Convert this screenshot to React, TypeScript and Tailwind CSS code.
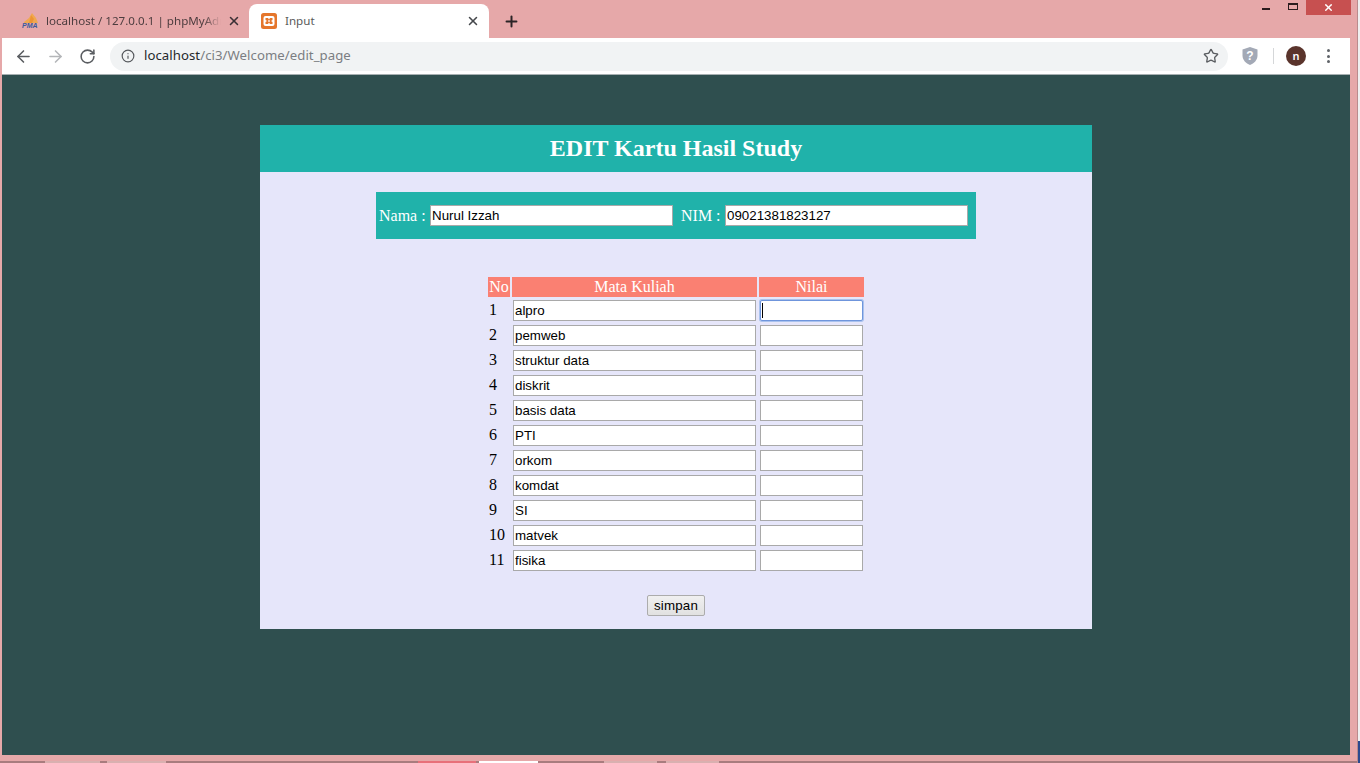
import { ArrowLeft, ArrowRight, Info, Plus, RotateCw, Star, X } from "lucide-react";

const matkul = [
  "alpro",
  "pemweb",
  "struktur data",
  "diskrit",
  "basis data",
  "PTI",
  "orkom",
  "komdat",
  "SI",
  "matvek",
  "fisika",
];

const taskItems = [
  { ml: "ml-[45px]", w: "w-[55px]", bg: "bg-[#d9b0b0]" },
  { ml: "ml-[7px]", w: "w-[59px]", bg: "bg-[#d9b0b0]" },
  { ml: "ml-[252px]", w: "w-[58px]", bg: "bg-[#e8707a]" },
  { ml: "ml-[3px]", w: "w-[59px]", bg: "bg-white" },
  { ml: "ml-[66px]", w: "w-[53px]", bg: "bg-[#d9b0b0]" },
  { ml: "ml-[9px]", w: "w-[53px]", bg: "bg-[#d9b0b0]" },
];

function PmaIcon() {
  return (
    <svg width="18" height="16" viewBox="0 0 18 16" className="shrink-0">
      <path d="M3 9 L8 5 L11 0 L15 5 L17 10 L3 10 Z" fill="#f0a850" />
      <path d="M10 2 L13 6 L11 10 L8 10 Z" fill="#ee9434" />
      <text x="1" y="15" fontSize="7" fontWeight="700" fontStyle="italic" fontFamily="Liberation Sans, sans-serif" fill="#3b5a9a">
        PMA
      </text>
    </svg>
  );
}

function XamppIcon() {
  return (
    <svg width="16" height="16" viewBox="0 0 16 16" className="shrink-0">
      <rect width="16" height="16" rx="2.5" fill="#e5762c" />
      <rect x="2.5" y="3" width="11" height="10" rx="2" fill="#fff" />
      <path d="M4.5 5 H7 L8 6.5 L9 5 H11.5 V7 L10 8 L11.5 9 V11 H9 L8 9.5 L7 11 H4.5 V9 L6 8 L4.5 7 Z" fill="#e5762c" />
      <rect x="7.2" y="7.2" width="1.6" height="1.6" fill="#fff" />
    </svg>
  );
}

function ShieldIcon() {
  return (
    <svg width="16" height="18" viewBox="0 0 16 18" className="shrink-0">
      <path d="M8 0 L15.5 2.5 V8.5 C15.5 13 12 16.5 8 18 C4 16.5 0.5 13 0.5 8.5 V2.5 Z" fill="#a3a9b6" />
      <text x="8" y="13" textAnchor="middle" fontSize="12" fontWeight="700" fontFamily="Liberation Sans, sans-serif" fill="#fff">
        ?
      </text>
    </svg>
  );
}

function TabStrip() {
  return (
    <div className="relative flex h-[38px] shrink-0 items-end">
      <div className="ml-[21px] flex h-[34px] w-[224px] items-center">
        <PmaIcon />
        <span className="ml-[7px] w-[175px] overflow-hidden whitespace-nowrap text-[11.6px] text-[#4d3d3f] [mask-image:linear-gradient(to_right,black_90%,transparent)]">
          localhost / 127.0.0.1 | phpMyAdmin
        </span>
        <X size={14} strokeWidth={2.6} className="ml-[6px] shrink-0 text-[#3b3035]" />
      </div>
      <div className="ml-[4px] flex h-[34px] w-[240px] items-center rounded-t-[8px] bg-white pl-[12px]">
        <XamppIcon />
        <span className="ml-[8px] flex-1 text-[11.6px] text-[#5a5a5a]">Input</span>
        <X size={14} strokeWidth={2.6} className="mr-[9px] text-[#45484c]" />
      </div>
      <div className="ml-[14px] flex h-[34px] items-center">
        <Plus size={17} strokeWidth={2.8} className="text-[#2b2426]" />
      </div>

      {/* window buttons */}
      <div className="absolute right-[6px] top-0 flex items-start">
        <div className="mr-[18px] mt-[8px] h-[2px] w-[8px] bg-[#2a1c1e]" />
        <div className="mr-[8px] mt-[3px] h-[7px] w-[10px] border border-t-2 border-[#2a1c1e]" />
        <div className="flex h-[15px] w-[45px] items-center justify-center bg-[#c75050]">
          <X size={11} strokeWidth={3} className="text-white" />
        </div>
      </div>
    </div>
  );
}

function Toolbar() {
  return (
    <div className="ml-[2px] mr-[7px] flex h-[37px] shrink-0 items-center border-b border-[#a7b0b2] bg-white">
      <ArrowLeft size={19} strokeWidth={2} className="ml-[12px] text-[#5a5d61]" />
      <ArrowRight size={19} strokeWidth={2} className="ml-[13px] text-[#b4b6b9]" />
      <RotateCw size={17} strokeWidth={2.2} className="ml-[14px] text-[#5a5d61]" />
      <div className="ml-[14px] flex h-[29px] w-[1118px] items-center rounded-full bg-[#f1f3f4] pl-[11px]">
        <Info size={14} strokeWidth={2} className="text-[#55585c]" />
        <span className="ml-[9px] text-[13.2px] tracking-[0.05px] text-[#7b7e82]">
          <span className="text-[#25282b]">localhost</span>/ci3/Welcome/edit_page
        </span>
      </div>
      <Star size={16} strokeWidth={2} className="-ml-[25px] text-[#5a5d61]" />
      <div className="ml-[23px]">
        <ShieldIcon />
      </div>
      <div className="ml-[15px] h-[16px] w-px bg-[#d5d7d9]" />
      <div className="ml-[12px] flex h-[20px] w-[20px] items-center justify-center rounded-full bg-[#5a342c] text-[11px] font-semibold text-white">
        n
      </div>
      <div className="ml-[21px] flex flex-col gap-[2.5px]">
        <span className="h-[3px] w-[3px] rounded-full bg-[#5f6368]" />
        <span className="h-[3px] w-[3px] rounded-full bg-[#5f6368]" />
        <span className="h-[3px] w-[3px] rounded-full bg-[#5f6368]" />
      </div>
    </div>
  );
}

const inputClass =
  "h-[21px] border border-[#a9a9a9] bg-white px-px font-['Liberation_Sans',sans-serif] text-[13.33px] text-black outline-none";

function Khs() {
  return (
    <div className="mx-auto mt-[50px] w-[832px] bg-[#e6e6fa] font-['Liberation_Serif',serif] text-[16px]">
      <div className="flex h-[47px] items-center justify-center bg-[#20b2aa] pb-[2px] text-[24px] font-bold text-white">
        EDIT Kartu Hasil Study
      </div>

      <div className="mx-auto mt-[20px] flex h-[47px] w-[600px] items-center bg-[#20b2aa] pl-[3px] text-white">
        <span className="w-[51px]">Nama :</span>
        <input readOnly defaultValue="Nurul Izzah" className={`${inputClass} w-[243px]`} />
        <span className="ml-[8px] w-[44px]">NIM :</span>
        <input readOnly defaultValue="09021381823127" className={`${inputClass} w-[243px]`} />
      </div>

      <div className="mx-auto mt-[38px] grid w-[376px] grid-cols-[22px_245px_105px] gap-x-[2px] gap-y-[4px] text-black">
        <div className="flex h-[20px] items-center justify-center bg-[#fa8072] text-white">No</div>
        <div className="flex h-[20px] items-center justify-center bg-[#fa8072] text-white">Mata Kuliah</div>
        <div className="flex h-[20px] items-center justify-center bg-[#fa8072] text-white">Nilai</div>
        {matkul.map((m, i) => (
          <div key={m} className="contents">
            <div className={`flex h-[21px] items-center pb-[2px] pl-px ${i === 0 ? "-mt-px" : ""}`}>{i + 1}</div>
            <div className={`px-px ${i === 0 ? "-mt-px" : ""}`}>
              <input readOnly defaultValue={m} className={`${inputClass} block w-full`} />
            </div>
            <div className={`relative px-px ${i === 0 ? "-mt-px" : ""}`}>
              <input
                readOnly
                className={`${inputClass} block w-[103px] ${i === 0 ? "rounded-[2px] !border-[#6f95dc] ring-1 ring-[#a9c2ee]" : ""}`}
              />
              {i === 0 && <span className="absolute left-[3px] top-[3px] h-[15px] w-px bg-black" />}
            </div>
          </div>
        ))}
      </div>

      <div className="flex justify-center pb-[13px] pt-[24px]">
        <button className="h-[21px] w-[58px] rounded-[2px] border border-[#acacac] bg-gradient-to-b from-[#f0f0f0] to-[#e1e1e1] font-['Liberation_Sans',sans-serif] text-[13.33px] tracking-[0.2px] text-black">
          simpan
        </button>
      </div>
    </div>
  );
}

export default function App() {
  return (
    <div className="flex h-[763px] w-[1360px] overflow-hidden font-['Noto_Sans',sans-serif]">
      <div className="flex w-[1358px] shrink-0 flex-col border-r border-[#b98b8d] bg-[#e6a8a9]">
        <TabStrip />
        <Toolbar />
        <div className="ml-[2px] mr-[7px] h-[680px] shrink-0 overflow-hidden bg-[#2f4f4f]">
          <Khs />
        </div>
        <div className="mt-[6px] flex h-[2px] shrink-0 bg-[#a87c7e]">
          {taskItems.map((t, i) => (
            <div key={i} className={`${t.ml} ${t.w} ${t.bg}`} />
          ))}
        </div>
      </div>
      {/* sliver of the window behind */}
      <div className="flex w-[2px] flex-col justify-end bg-[#f0f0f0]">
        <div className="h-[22px] bg-[#2b4a8f]" />
      </div>
    </div>
  );
}
